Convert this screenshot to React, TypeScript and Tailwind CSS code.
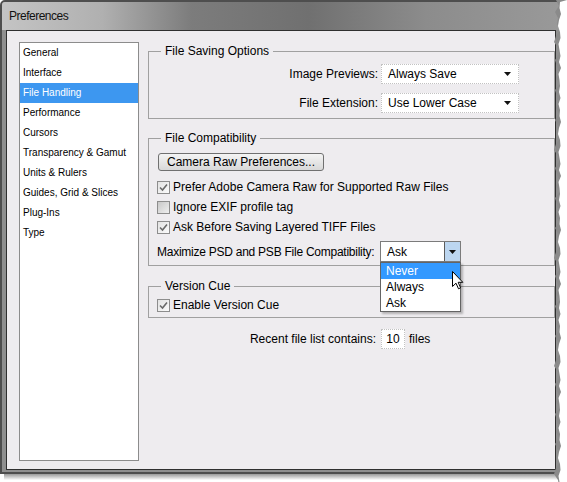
import React from 'react'

const categories = [
    'General',
    'Interface',
    'File Handling',
    'Performance',
    'Cursors',
    'Transparency & Gamut',
    'Units & Rulers',
    'Guides, Grid & Slices',
    'Plug-Ins',
    'Type',
]

// offsets for the torn right edge of the screenshot
const tear = [2, 5, 1, 4, 3, 6, 2, 0, 4, 5, 1, 3, 5, 2, 6, 1, 3, 4]

function Arrow() {
    return (
        <svg width="7" height="4" viewBox="0 0 7 4">
            <polygon points="0,0 7,0 3.5,4" fill="#111" />
        </svg>
    )
}

function Select({ value }: { value: string }) {
    return (
        <div className="w-[138px] h-[20px] border border-dotted border-[#c2c2c2] bg-white flex items-center justify-between pl-[6px] pr-[7px]">
            <span>{value}</span>
            <Arrow />
        </div>
    )
}

function Checkbox({ checked, label }: { checked: boolean; label: string }) {
    return (
        <div className="h-[20px] flex items-center gap-[3px]">
            <span className={`w-[13px] h-[13px] border border-[#8d8d8d] flex items-center justify-center ${checked ? 'bg-gradient-to-br from-[#e2e2e2] to-[#fbfbfb]' : 'bg-gradient-to-br from-[#c8c8c8] to-[#efefef]'}`}>
                {checked &&
                    <svg width="9" height="9" viewBox="0 0 9 9">
                        <path d="M1 4.5 L3.5 7 L8 1.5" fill="none" stroke="#6a6a6a" strokeWidth={1.6} />
                    </svg>
                }
            </span>
            <span>{label}</span>
        </div>
    )
}

function Group({ title, className, children }: { title: string; className?: string; children: React.ReactNode }) {
    return (
        <fieldset className={`border border-[#a0a0a0] pl-[8px] ${className ?? ''}`}>
            <legend className="ml-[4px] px-[4px] leading-[18px]">{title}</legend>
            {children}
        </fieldset>
    )
}

export default function App() {
    const grey = ['14,0', ...Array.from({ length: 82 }, (_, i) => `${tear[i % tear.length] + 1},${i * 6}`), '14,482'].join(' ')
    const white = ['14,0', ...Array.from({ length: 82 }, (_, i) => `${tear[(i + 3) % tear.length] / 2 + 5},${i * 6 + 2}`), '14,482'].join(' ')

    return (
        <div className="relative w-[567px] h-[482px] overflow-hidden bg-white text-[12px] leading-[16px] text-black font-['Liberation_Sans',Arial,sans-serif]">
            <div className="w-[562px]">
                <div className="h-[474px] flex flex-col border-2 border-[#4e4e4e] rounded-tl-[5px] overflow-hidden bg-[#8f8f8f]">
                    <div className="h-[28px] shrink-0 flex items-center pl-[7px] text-[12px] tracking-[-0.5px] text-[#111] bg-[linear-gradient(90deg,#c4c4c4_0%,#b0b0b0_18%,#7c7c7c_34%,#707070_55%,#8c8c8c_76%,#999999_100%)]">
                        Preferences
                    </div>
                    <div className="flex-1 flex px-[4px] pb-[2px]">
                        <div className="flex-1 flex gap-[9px] border border-[#2f2f2f] bg-[#eeecef] pt-[11px] pb-[8px] pl-[12px]">
                            <div className="w-[120px] border border-[#8c8c8c] bg-white text-[10px]">
                                {categories.map(c => (
                                    <div key={c} className={`h-[20px] flex items-center pl-[3px] whitespace-nowrap ${c === 'File Handling' ? 'bg-[#3d97f0] text-white' : ''}`}>
                                        {c}
                                    </div>
                                ))}
                            </div>

                            <div className="flex-1 flex flex-col">
                                <Group title="File Saving Options" className="pb-[5px]">
                                    <div className="mt-[4px] flex items-center">
                                        <span className="w-[224px] text-right pr-[3px]">Image Previews:</span>
                                        <Select value="Always Save" />
                                    </div>
                                    <div className="mt-[9px] flex items-center">
                                        <span className="w-[224px] text-right pr-[3px]">File Extension:</span>
                                        <Select value="Use Lower Case" />
                                    </div>
                                </Group>

                                <Group title="File Compatibility" className="mt-[10px] pb-[3px]">
                                    <button className="mt-[6px] ml-[1px] w-[166px] h-[18px] border border-[#707070] rounded-[3px] bg-gradient-to-b from-[#f4f4f4] to-[#d8d8d8] text-[12px] leading-[16px]">
                                        Camera Raw Preferences...
                                    </button>
                                    <div className="mt-[6px]">
                                        <Checkbox checked label="Prefer Adobe Camera Raw for Supported Raw Files" />
                                        <Checkbox checked={false} label="Ignore EXIF profile tag" />
                                        <Checkbox checked label="Ask Before Saving Layered TIFF Files" />
                                    </div>
                                    <div className="mt-[4px] flex items-center">
                                        <span className="w-[223px] whitespace-nowrap tracking-[-0.25px]">Maximize PSD and PSB File Compatibility:</span>
                                        <div className="relative w-[81px] h-[21px] border border-[#7b7b7b] bg-white flex">
                                            <span className="flex-1 pl-[6px] flex items-center">Ask</span>
                                            <span className="w-[16px] border-l border-[#5c5c5c] bg-[#bcd6f0] flex items-center justify-center">
                                                <Arrow />
                                            </span>
                                            <div className="absolute z-10 left-[-1px] top-[20px] w-[81px] border border-[#646464] bg-white shadow-[2px_2px_2px_rgba(0,0,0,0.25)]">
                                                <div className="h-[16px] flex items-center pl-[5px] bg-[#3399ff] text-white">Never</div>
                                                <div className="h-[16px] flex items-center pl-[5px]">Always</div>
                                                <div className="h-[16px] flex items-center pl-[5px]">Ask</div>
                                                <svg className="absolute left-[71px] top-[8px]" width="12" height="19" viewBox="0 0 12 19">
                                                    <path d="M0.5 0.5 L0.5 15.5 L4 12.2 L6.5 17.8 L8.6 16.8 L6.2 11.3 L10.8 11.3 Z" fill="white" stroke="black" strokeWidth={1} />
                                                </svg>
                                            </div>
                                        </div>
                                    </div>
                                </Group>

                                <Group title="Version Cue" className="mt-[11px] pb-[2px]">
                                    <Checkbox checked label="Enable Version Cue" />
                                </Group>

                                <div className="mt-[11px] pl-[9px] flex items-center">
                                    <span className="w-[224px] text-right pr-[5px]">Recent file list contains:</span>
                                    <span className="w-[24px] h-[20px] border border-dotted border-[#c2c2c2] bg-white flex items-center justify-center">10</span>
                                    <span className="ml-[4px]">files</span>
                                </div>
                            </div>
                        </div>
                    </div>
                </div>
                <div className="ml-[4px] h-[6px] bg-gradient-to-b from-[#9a9a9a] to-white" />
            </div>

            <svg className="absolute top-0 right-0" width="14" height="482" viewBox="0 0 14 482">
                <polygon points={grey} fill="#8a8a8a" />
                <polygon points={white} fill="white" />
            </svg>
        </div>
    )
}
